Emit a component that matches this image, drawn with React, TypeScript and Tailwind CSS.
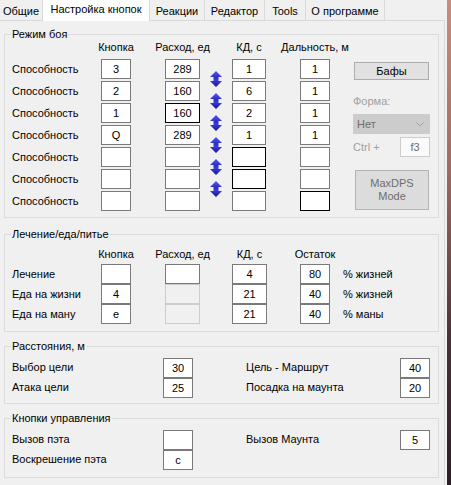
import React from "react";

type BoxKind = "normal" | "focus" | "disabled";

// Single-line edit field, WinForms look
function Box({ value = "", w = "w-[30px]", kind = "normal" }: { value?: string; w?: string; kind?: BoxKind }) {
  const tone =
    kind === "focus"
      ? "border-black bg-white text-black"
      : kind === "disabled"
        ? "border-[#cccccc] bg-[#f0f0f0] text-[#6d6d6d]"
        : "border-[#7a7a7a] bg-white text-black";
  return (
    <div className={`flex h-[20px] shrink-0 items-center justify-center border leading-[13px] ${w} ${tone}`}>
      {value}
    </div>
  );
}

function Group({ title, className, children }: { title: string; className?: string; children: React.ReactNode }) {
  return (
    <fieldset className={`ml-[4px] w-[435px] border border-[#dcdcdc] ${className ?? ""}`}>
      <legend className="ml-[6px] px-[1px] leading-[13px]">{title}</legend>
      {children}
    </fieldset>
  );
}

// Column with a centered header above a stack of fields
function Col({
  head,
  w,
  className = "",
  gap = "mt-[5px]",
  stack = "gap-[2px]",
  children,
}: {
  head?: string;
  w: string;
  className?: string;
  gap?: string;
  stack?: string;
  children: React.ReactNode;
}) {
  return (
    <div className={`flex shrink-0 flex-col items-center ${w} ${className}`}>
      <div className="h-[13px] whitespace-nowrap leading-[13px]">{head}</div>
      <div className={`flex flex-col ${stack} ${gap}`}>{children}</div>
    </div>
  );
}

function SwapArrow() {
  return (
    <svg width="12" height="16" viewBox="0 0 12 16">
      <defs>
        <linearGradient id="swapGrad" x1="0" y1="0" x2="0" y2="1">
          <stop offset="0" stopColor="#5656f2" />
          <stop offset="0.45" stopColor="#2a2ac4" />
          <stop offset="0.55" stopColor="#3c3ce0" />
          <stop offset="1" stopColor="#17178f" />
        </linearGradient>
      </defs>
      <path d="M6 0 L12 6 L8.5 6 L8.5 10 L12 10 L6 16 L0 10 L3.5 10 L3.5 6 L0 6 Z" fill="url(#swapGrad)" />
    </svg>
  );
}

const tabs = [
  { label: "Общие", w: "w-[43px]" },
  { label: "Настройка кнопок", w: "w-[107px]", active: true },
  { label: "Реакции", w: "w-[55px]" },
  { label: "Редактор", w: "w-[60px]" },
  { label: "Tools", w: "w-[41px]" },
  { label: "О программе", w: "w-[79px]" },
];

type Skill = {
  key?: string;
  cost?: string;
  cd?: string;
  range?: string;
  costFocus?: boolean;
  cdFocus?: boolean;
  rangeFocus?: boolean;
};

const skills: Skill[] = [
  { key: "3", cost: "289", cd: "1", range: "1" },
  { key: "2", cost: "160", cd: "6", range: "1" },
  { key: "1", cost: "160", cd: "2", range: "1", costFocus: true },
  { key: "Q", cost: "289", cd: "1", range: "1" },
  { cdFocus: true },
  { cdFocus: true },
  { rangeFocus: true },
];

const consumables = [
  { name: "Лечение", key: "", costOn: true, cd: "4", left: "80", unit: "% жизней" },
  { name: "Еда на жизни", key: "4", costOn: false, cd: "21", left: "40", unit: "% жизней" },
  { name: "Еда на ману", key: "e", costOn: false, cd: "21", left: "40", unit: "% маны" },
];

export default function App() {
  return (
    <div className="flex h-[485px] w-[451px] overflow-hidden bg-[#f0f0f0] font-['Liberation_Sans',Arial,sans-serif] text-[11px] text-black">
      <div className="flex w-[447px] shrink-0 flex-col">
        {/* tab headers */}
        <div className="flex h-[20px] shrink-0">
          {tabs.map((t) =>
            t.active ? (
              <div
                key={t.label}
                className={`relative z-10 flex h-[21px] shrink-0 justify-center border-r border-[#d9d9d9] bg-white pt-[3px] leading-[13px] ${t.w}`}
              >
                {t.label}
              </div>
            ) : (
              <div
                key={t.label}
                className={`flex h-[20px] shrink-0 justify-center border-r border-[#d9d9d9] bg-[#f0f0f0] pt-[5px] leading-[13px] ${t.w}`}
              >
                {t.label}
              </div>
            ),
          )}
        </div>

        {/* tab page */}
        <div className="w-[445px] flex-1 border-t border-r border-[#d9d9d9] bg-[#f0f0f0]">
          <Group title="Режим боя" className="mt-[7px] pb-[6px]">
            <div className="flex">
              <div className="flex w-[96px] shrink-0 flex-col gap-[2px] pt-[18px] pl-[7px]">
                {skills.map((_, i) => (
                  <div key={i} className="h-[20px] leading-[20px]">
                    Способность
                  </div>
                ))}
              </div>
              <Col head="Кнопка" w="w-[30px]">
                {skills.map((s, i) => (
                  <Box key={i} value={s.key} />
                ))}
              </Col>
              <Col head="Расход, ед" w="w-[35px]" className="ml-[34px]">
                {skills.map((s, i) => (
                  <Box key={i} value={s.cost} w="w-[35px]" kind={s.costFocus ? "focus" : "normal"} />
                ))}
              </Col>
              <div className="ml-[10px] flex w-[12px] shrink-0 flex-col gap-[6px] pt-[30px]">
                {Array.from({ length: 6 }).map((_, i) => (
                  <SwapArrow key={i} />
                ))}
              </div>
              <Col head="КД, с" w="w-[34px]" className="ml-[10px]">
                {skills.map((s, i) => (
                  <Box key={i} value={s.cd} w="w-[34px]" kind={s.cdFocus ? "focus" : "normal"} />
                ))}
              </Col>
              <Col head="Дальность, м" w="w-[30px]" className="ml-[34px]">
                {skills.map((s, i) => (
                  <Box key={i} value={s.range} kind={s.rangeFocus ? "focus" : "normal"} />
                ))}
              </Col>

              {/* buffs / form / MaxDPS */}
              <div className="ml-[23px] flex w-[77px] shrink-0 flex-col pt-[21px]">
                <div className="ml-px flex h-[18px] w-[75px] items-center justify-center border border-[#adadad] bg-[#e1e1e1] leading-[13px]">
                  Бафы
                </div>
                <div className="mt-[15px] h-[13px] leading-[13px] text-[#a0a0a0]">Форма:</div>
                <div className="mt-[6px] flex h-[20px] items-center justify-between bg-[#cccccc] pr-[6px] pl-[4px] text-[#6d6d6d]">
                  <span className="leading-[13px]">Нет</span>
                  <svg width="8" height="5" viewBox="0 0 8 5">
                    <polyline points="0.5,0.5 4,4 7.5,0.5" fill="none" stroke="#a6a6a6" strokeWidth="1" />
                  </svg>
                </div>
                <div className="mt-[3px] flex h-[20px] items-center justify-between">
                  <span className="leading-[13px] text-[#a0a0a0]">Ctrl +</span>
                  <div className="flex h-[20px] w-[30px] items-center justify-center border border-[#cccccc] bg-[#fafafa] text-[#6d6d6d]">
                    f3
                  </div>
                </div>
                <div className="mt-[13px] ml-[2px] flex h-[40px] w-[74px] flex-col items-center justify-center border border-[#b4b4b4] bg-[#dcdcdc] leading-[13px] text-[#6d6d6d]">
                  <span>MaxDPS</span>
                  <span>Mode</span>
                </div>
              </div>
            </div>
          </Group>

          <Group title="Лечение/еда/питье" className="mt-[10px] pb-[7px]">
            <div className="flex pt-[7px]">
              <div className="flex w-[96px] shrink-0 flex-col pt-[16px] pl-[7px]">
                {consumables.map((c) => (
                  <div key={c.name} className="h-[20px] leading-[20px]">
                    {c.name}
                  </div>
                ))}
              </div>
              <Col head="Кнопка" w="w-[30px]" gap="mt-[3px]" stack="gap-0">
                {consumables.map((c) => (
                  <Box key={c.name} value={c.key} />
                ))}
              </Col>
              <Col head="Расход, ед" w="w-[35px]" className="ml-[34px]" gap="mt-[3px]" stack="gap-0">
                {consumables.map((c) => (
                  <Box key={c.name} w="w-[35px]" kind={c.costOn ? "normal" : "disabled"} />
                ))}
              </Col>
              <Col head="КД, с" w="w-[35px]" className="ml-[32px]" gap="mt-[3px]" stack="gap-0">
                {consumables.map((c) => (
                  <Box key={c.name} value={c.cd} w="w-[35px]" />
                ))}
              </Col>
              <Col head="Остаток" w="w-[30px]" className="ml-[33px]" gap="mt-[3px]" stack="gap-0">
                {consumables.map((c) => (
                  <Box key={c.name} value={c.left} />
                ))}
              </Col>
              <div className="ml-[13px] flex flex-col pt-[16px]">
                {consumables.map((c) => (
                  <div key={c.name} className="h-[20px] leading-[20px]">
                    {c.unit}
                  </div>
                ))}
              </div>
            </div>
          </Group>

          <Group title="Расстояния, м" className="mt-[8px] pb-[5px]">
            <div className="flex pt-[5px]">
              <div className="flex w-[158px] shrink-0 flex-col pl-[7px]">
                <div className="h-[20px] leading-[18px]">Выбор цели</div>
                <div className="h-[20px] leading-[18px]">Атака цели</div>
              </div>
              <div className="flex flex-col">
                <Box value="30" />
                <Box value="25" />
              </div>
              <div className="ml-[53px] flex w-[154px] shrink-0 flex-col">
                <div className="h-[20px] leading-[18px]">Цель - Маршрут</div>
                <div className="h-[20px] leading-[18px]">Посадка на маунта</div>
              </div>
              <div className="flex flex-col">
                <Box value="40" />
                <Box value="20" />
              </div>
            </div>
          </Group>

          <Group title="Кнопки управления" className="mt-[8px] pb-[7px]">
            <div className="flex pt-[5px]">
              <div className="flex w-[158px] shrink-0 flex-col pl-[7px]">
                <div className="h-[20px] leading-[18px]">Вызов пэта</div>
                <div className="h-[20px] leading-[18px]">Воскрешение пэта</div>
              </div>
              <div className="flex flex-col">
                <Box />
                <Box value="c" />
              </div>
              <div className="ml-[53px] flex w-[154px] shrink-0 flex-col">
                <div className="h-[20px] leading-[18px]">Вызов Маунта</div>
              </div>
              <div className="flex flex-col">
                <Box value="5" />
              </div>
            </div>
          </Group>
        </div>
      </div>

      {/* desktop showing past the window edge */}
      <div className="w-[4px] shrink-0 bg-[linear-gradient(to_bottom,#c98d7c_0%,#a06a62_35%,#4a3038_70%,#2c1e26_100%)]" />
    </div>
  );
}
